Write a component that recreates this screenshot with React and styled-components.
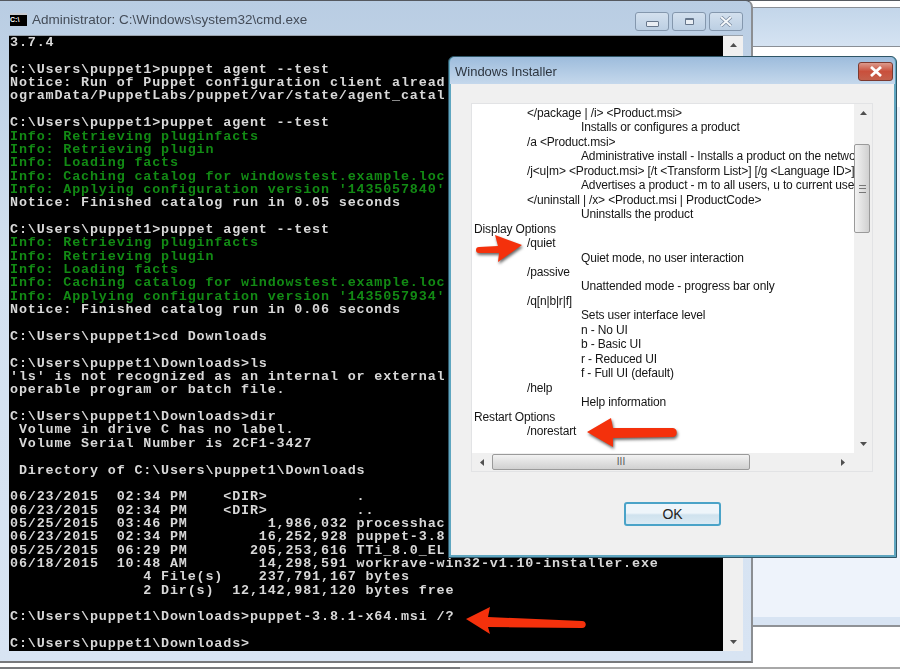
import React from "react";
import styled, { createGlobalStyle } from "styled-components";

const GlobalStyle = createGlobalStyle`
  html, body {
    margin: 0;
    padding: 0;
    background: #fff;
  }
`;

const consoleLines = [
  ["3.7.4"],
  [""],
  ["C:\\Users\\puppet1>puppet agent --test"],
  ["Notice: Run of Puppet configuration client alread"],
  ["ogramData/PuppetLabs/puppet/var/state/agent_catal"],
  [""],
  ["C:\\Users\\puppet1>puppet agent --test"],
  ["Info: Retrieving pluginfacts", true],
  ["Info: Retrieving plugin", true],
  ["Info: Loading facts", true],
  ["Info: Caching catalog for windowstest.example.loc", true],
  ["Info: Applying configuration version '1435057840'", true],
  ["Notice: Finished catalog run in 0.05 seconds"],
  [""],
  ["C:\\Users\\puppet1>puppet agent --test"],
  ["Info: Retrieving pluginfacts", true],
  ["Info: Retrieving plugin", true],
  ["Info: Loading facts", true],
  ["Info: Caching catalog for windowstest.example.loc", true],
  ["Info: Applying configuration version '1435057934'", true],
  ["Notice: Finished catalog run in 0.06 seconds"],
  [""],
  ["C:\\Users\\puppet1>cd Downloads"],
  [""],
  ["C:\\Users\\puppet1\\Downloads>ls"],
  ["'ls' is not recognized as an internal or external"],
  ["operable program or batch file."],
  [""],
  ["C:\\Users\\puppet1\\Downloads>dir"],
  [" Volume in drive C has no label."],
  [" Volume Serial Number is 2CF1-3427"],
  [""],
  [" Directory of C:\\Users\\puppet1\\Downloads"],
  [""],
  ["06/23/2015  02:34 PM    <DIR>          ."],
  ["06/23/2015  02:34 PM    <DIR>          .."],
  ["05/25/2015  03:46 PM         1,986,032 processhac"],
  ["06/23/2015  02:34 PM        16,252,928 puppet-3.8"],
  ["05/25/2015  06:29 PM       205,253,616 TTi_8.0_EL"],
  ["06/18/2015  10:48 AM        14,298,591 workrave-win32-v1.10-installer.exe"],
  ["               4 File(s)    237,791,167 bytes"],
  ["               2 Dir(s)  12,142,981,120 bytes free"],
  [""],
  ["C:\\Users\\puppet1\\Downloads>puppet-3.8.1-x64.msi /?"],
  [""],
  ["C:\\Users\\puppet1\\Downloads>"],
];

const helpLines = [
  [1, "</package | /i> <Product.msi>"],
  [2, "Installs or configures a product"],
  [1, "/a <Product.msi>"],
  [2, "Administrative install - Installs a product on the network"],
  [1, "/j<u|m> <Product.msi> [/t <Transform List>] [/g <Language ID>]"],
  [2, "Advertises a product - m to all users, u to current user"],
  [1, "</uninstall | /x> <Product.msi | ProductCode>"],
  [2, "Uninstalls the product"],
  [0, "Display Options"],
  [1, "/quiet"],
  [2, "Quiet mode, no user interaction"],
  [1, "/passive"],
  [2, "Unattended mode - progress bar only"],
  [1, "/q[n|b|r|f]"],
  [2, "Sets user interface level"],
  [2, "n - No UI"],
  [2, "b - Basic UI"],
  [2, "r - Reduced UI"],
  [2, "f - Full UI (default)"],
  [1, "/help"],
  [2, "Help information"],
  [0, "Restart Options"],
  [1, "/norestart"],
];

const ArrowUp = () => (
  <svg width="9" height="6" viewBox="0 0 9 6"><path d="M4.5 1L8 5H1z" fill="#505050" /></svg>
);
const ArrowDown = () => (
  <svg width="9" height="6" viewBox="0 0 9 6"><path d="M1 1h7L4.5 5z" fill="#505050" /></svg>
);
const ArrowLeft = () => (
  <svg width="6" height="9" viewBox="0 0 6 9"><path d="M5 1v7L1 4.5z" fill="#505050" /></svg>
);
const ArrowRight = () => (
  <svg width="6" height="9" viewBox="0 0 6 9"><path d="M1 1v7l4-3.5z" fill="#505050" /></svg>
);

// red callout arrows, each drawn to its own shape and size
const RedArrow = ({ className, width, height, d }) => (
  <svg className={className} width={width} height={height} viewBox={`0 0 ${width} ${height}`}>
    <path
      d={d}
      fill="#f4310c"
      style={{ filter: "drop-shadow(1px 2px 1.5px rgba(0,0,0,0.6))" }}
    />
  </svg>
);

const App = () => (
  <>
    <GlobalStyle />
    <Desktop>
      <BackWindow>
        <BackTop />
        <BackChrome />
        <BackGap />
        <BackPanel />
        <BackFooter />
      </BackWindow>
      <BottomRule />

      <CmdWindow>
        <CmdTitleBar>
          <CmdIcon>C:\</CmdIcon>
          <CmdTitle>Administrator: C:\Windows\system32\cmd.exe</CmdTitle>
          <CaptionGroup>
            <CaptionButton>
              <MinGlyph />
            </CaptionButton>
            <CaptionButton>
              <MaxGlyph />
            </CaptionButton>
            <CaptionButton>
              <CloseGlyph viewBox="0 0 14 11">
                <path d="M2 1l10 9M12 1L2 10" stroke="#76879d" strokeWidth="3.4" />
                <path d="M2 1l10 9M12 1L2 10" stroke="#f4f7fa" strokeWidth="2" />
              </CloseGlyph>
            </CaptionButton>
          </CaptionGroup>
        </CmdTitleBar>
        <CmdBody>
          <Console>
            {consoleLines.map(([text, green], i) => (
              <ConsoleLine key={i} $green={green}>
                {text || " "}
              </ConsoleLine>
            ))}
          </Console>
          <CmdScroll>
            <ScrollCap>
              <ArrowUp />
            </ScrollCap>
            <ScrollCap>
              <ArrowDown />
            </ScrollCap>
          </CmdScroll>
        </CmdBody>
      </CmdWindow>

      <Dialog>
        <DialogTitleBar>
          <DialogTitle>Windows Installer</DialogTitle>
          <DialogClose>
            <CloseGlyph viewBox="0 0 14 11">
              <path d="M2 1l10 9M12 1L2 10" stroke="#fff" strokeWidth="2.8" />
            </CloseGlyph>
          </DialogClose>
        </DialogTitleBar>
        <DialogBody>
          <ListBox>
            <ListRow>
              <HelpText>
                {helpLines.map(([level, text], i) => (
                  <HelpLine key={i} $level={level}>
                    {text}
                  </HelpLine>
                ))}
              </HelpText>
              <ListVScroll>
                <ScrollCap>
                  <ArrowUp />
                </ScrollCap>
                <ThumbTrack>
                  <VThumb>
                    <Grip />
                  </VThumb>
                </ThumbTrack>
                <ScrollCap>
                  <ArrowDown />
                </ScrollCap>
              </ListVScroll>
            </ListRow>
            <HScroll>
              <HCap>
                <ArrowLeft />
              </HCap>
              <HTrack>
                <HThumb>III</HThumb>
              </HTrack>
              <HCap>
                <ArrowRight />
              </HCap>
              <Corner />
            </HScroll>
          </ListBox>
          <ButtonRow>
            <OkButton>OK</OkButton>
          </ButtonRow>
        </DialogBody>
      </Dialog>

      <QuietArrow
        width={52}
        height={34}
        d="M2 17c0-2 1-3 3-3l19-1-3-11 27 10-24 17 1-9-20 0c-2 0-3-1-3-3z"
      />
      <RestartArrow
        width={98}
        height={36}
        d="M2 15L26 1l2 10h60c5 0 5 9 0 9l-60 1v9z"
      />
      <CommandArrow
        width={126}
        height={36}
        d="M2 14L26 2l-2 10 94 4c5 0 5 7 0 7l-94-1 2 7z"
      />
    </Desktop>
  </>
);

export default App;

const Desktop = styled.div`
  position: relative;
  width: 900px;
  height: 669px;
  overflow: hidden;
  background: #fff;
`;

const BackWindow = styled.div`
  position: absolute;
  left: 740px;
  top: 0;
  width: 160px;
  display: flex;
  flex-direction: column;
`;

const BackTop = styled.div`
  height: 8px;
  background: #fff;
  border-top: 1px solid #555a60;
  border-bottom: 1px solid #8a8f96;
  box-sizing: border-box;
`;

const BackChrome = styled.div`
  height: 38px;
  background: linear-gradient(#c3d6ea, #d5e3f2);
  border-bottom: 1px solid #8a8f96;
`;

const BackGap = styled.div`
  height: 60px;
  background: #fff;
`;

const BackPanel = styled.div`
  height: 510px;
  background: #eef3fb;
`;

const BackFooter = styled.div`
  height: 8px;
  background: #d8e4f3;
  border-bottom: 2px solid #8f9296;
`;

const BottomRule = styled.div`
  position: absolute;
  left: 0;
  right: 0;
  bottom: 0;
  height: 2px;
  background: linear-gradient(90deg, #77797c 460px, #a8a8a8 460px);
`;

const CmdWindow = styled.div`
  position: absolute;
  left: -1px;
  top: 0;
  width: 754px;
  height: 663px;
  box-sizing: border-box;
  border: 1px solid #55595f;
  border-right-width: 2px;
  border-bottom-width: 2px;
  border-right-color: #8b8e92;
  border-bottom-color: #77797c;
  border-radius: 0 7px 0 0;
  background: linear-gradient(#b9cde3, #d3e1f0 40%, #d8e4f3);
  display: flex;
  flex-direction: column;
  padding: 0 8px 10px 9px;
`;

const CmdTitleBar = styled.div`
  height: 34px;
  flex: none;
  display: flex;
  align-items: center;
  padding-top: 1px;
  box-sizing: border-box;
`;

const CmdIcon = styled.div`
  width: 17px;
  height: 13px;
  margin: 2px 5px 0 1px;
  box-sizing: border-box;
  background: #000;
  border-top: 2px solid #c9ccd2;
  color: #fff;
  font: bold 7px/10px "Liberation Sans", sans-serif;
  overflow: hidden;
`;

const CmdTitle = styled.div`
  flex: 1;
  font: 13.5px "Liberation Sans", Arial, sans-serif;
  color: #444c58;
  margin-top: 2px;
  filter: blur(0.3px);
`;

const CaptionGroup = styled.div`
  display: flex;
  gap: 3px;
  align-self: flex-start;
  margin-top: 10px;
`;

const CaptionButton = styled.div`
  width: 34px;
  height: 19px;
  box-sizing: border-box;
  border: 1px solid #8497ad;
  border-radius: 3px;
  background: linear-gradient(#d3e0ee, #bccfe3);
  display: flex;
  align-items: center;
  justify-content: center;
`;

const MinGlyph = styled.div`
  width: 11px;
  height: 4px;
  margin-top: 4px;
  background: #e9eef4;
  border: 1px solid #67778c;
  border-radius: 1px;
`;

const MaxGlyph = styled.div`
  width: 7px;
  height: 4px;
  background: #e9eef4;
  border: 1px solid #67778c;
  border-top-width: 2px;
  border-radius: 1px;
`;

const CloseGlyph = styled.svg`
  width: 14px;
  height: 11px;
  display: block;
`;

const CmdBody = styled.div`
  flex: 1;
  display: flex;
  min-height: 0;
  border-top: 1px solid #9aa3ad;
`;

const Console = styled.div`
  flex: 1;
  background: #000;
  overflow: hidden;
  filter: blur(0.35px);
`;

const ConsoleLine = styled.div`
  height: 13.36px;
  line-height: 13.36px;
  padding-left: 1px;
  font-family: "Liberation Mono", monospace;
  font-size: 13.4px;
  letter-spacing: 0.85px;
  font-weight: bold;
  white-space: pre;
  color: ${(p) => (p.$green ? "#128a14" : "#d8d8d8")};
`;

const CmdScroll = styled.div`
  width: 20px;
  flex: none;
  background: #f0f0f0;
  display: flex;
  flex-direction: column;
  justify-content: space-between;
`;

const ScrollCap = styled.div`
  height: 18px;
  display: flex;
  align-items: center;
  justify-content: center;
`;

const Dialog = styled.div`
  position: absolute;
  left: 448px;
  top: 56px;
  width: 449px;
  height: 502px;
  box-sizing: border-box;
  border: 1px solid #2f5566;
  border-radius: 6px 6px 0 0;
  background: #5fa6c0;
  padding: 0 2px 2px 2px;
  display: flex;
  flex-direction: column;
`;

const DialogTitleBar = styled.div`
  height: 27px;
  flex: none;
  display: flex;
  align-items: flex-start;
  justify-content: space-between;
  margin: 0 -1px;
  padding: 0 2px 0 5px;
  border-radius: 5px 5px 0 0;
  background: linear-gradient(#9dbcdc, #c5d8ec);
`;

const DialogTitle = styled.div`
  font: 13px/29px "Liberation Sans", Arial, sans-serif;
  color: #2e3640;
  filter: blur(0.3px);
`;

const DialogClose = styled.div`
  width: 35px;
  height: 19px;
  margin-top: 5px;
  box-sizing: border-box;
  border: 1px solid #7c3a30;
  border-radius: 3px;
  background: linear-gradient(#dc9a8c, #c9503c 50%, #c4604c);
  display: flex;
  align-items: center;
  justify-content: center;
`;

const DialogBody = styled.div`
  flex: 1;
  background: #f0f0f0;
  padding: 19px 21px 0 20px;
  display: flex;
  flex-direction: column;
`;

const ListBox = styled.div`
  height: 369px;
  flex: none;
  box-sizing: border-box;
  border: 1px solid #e2e3e5;
  background: #fff;
  display: flex;
  flex-direction: column;
`;

const ListRow = styled.div`
  flex: 1;
  display: flex;
  min-height: 0;
`;

const HelpText = styled.div`
  flex: 1;
  overflow: hidden;
  padding-top: 2px;
  font-family: "Liberation Sans", Arial, sans-serif;
  font-size: 12px;
  letter-spacing: -0.15px;
  color: #151515;
  filter: blur(0.3px);
`;

const HelpLine = styled.div`
  height: 14.46px;
  line-height: 14.46px;
  white-space: nowrap;
  padding-left: ${(p) => [2, 55, 109][p.$level]}px;
`;

const ListVScroll = styled.div`
  width: 18px;
  flex: none;
  background: #f0f0f0;
  display: flex;
  flex-direction: column;
`;

const ThumbTrack = styled.div`
  flex: 1;
  padding-top: 22px;
`;

const VThumb = styled.div`
  width: 16px;
  height: 89px;
  box-sizing: border-box;
  border: 1px solid #9a9a9a;
  border-radius: 2px;
  background: linear-gradient(90deg, #f2f2f2, #d0d0d0);
  display: flex;
  align-items: center;
  justify-content: center;
`;

const Grip = styled.div`
  width: 7px;
  height: 6px;
  border-top: 1px solid #777;
  border-bottom: 1px solid #777;
  background: linear-gradient(#0000 2px, #777 2px, #777 3px, #0000 3px);
`;

const HScroll = styled.div`
  height: 18px;
  flex: none;
  display: flex;
  background: #f0f0f0;
`;

const HCap = styled.div`
  width: 20px;
  flex: none;
  display: flex;
  align-items: center;
  justify-content: center;
`;

const HTrack = styled.div`
  flex: 1;
  padding-top: 1px;
`;

const HThumb = styled.div`
  width: 258px;
  height: 16px;
  box-sizing: border-box;
  border: 1px solid #9a9a9a;
  border-radius: 2px;
  background: linear-gradient(#f2f2f2, #d0d0d0);
  font: 10px/14px "Liberation Sans", sans-serif;
  color: #555;
  text-align: center;
`;

const Corner = styled.div`
  width: 19px;
  flex: none;
`;

const ButtonRow = styled.div`
  display: flex;
  justify-content: center;
  padding: 30px 0 0 1px;
`;

const OkButton = styled.div`
  width: 97px;
  height: 24px;
  box-sizing: border-box;
  border: 2px solid #4aa3c8;
  border-radius: 3px;
  background: linear-gradient(#eef5fa 45%, #cfe2ee 55%, #dbeaf3);
  font: 14px/20px "Liberation Sans", Arial, sans-serif;
  color: #222;
  text-align: center;
`;

const QuietArrow = styled(RedArrow)`
  position: absolute;
  left: 474px;
  top: 233px;
`;

const RestartArrow = styled(RedArrow)`
  position: absolute;
  left: 585px;
  top: 417px;
`;

const CommandArrow = styled(RedArrow)`
  position: absolute;
  left: 464px;
  top: 605px;
`;
